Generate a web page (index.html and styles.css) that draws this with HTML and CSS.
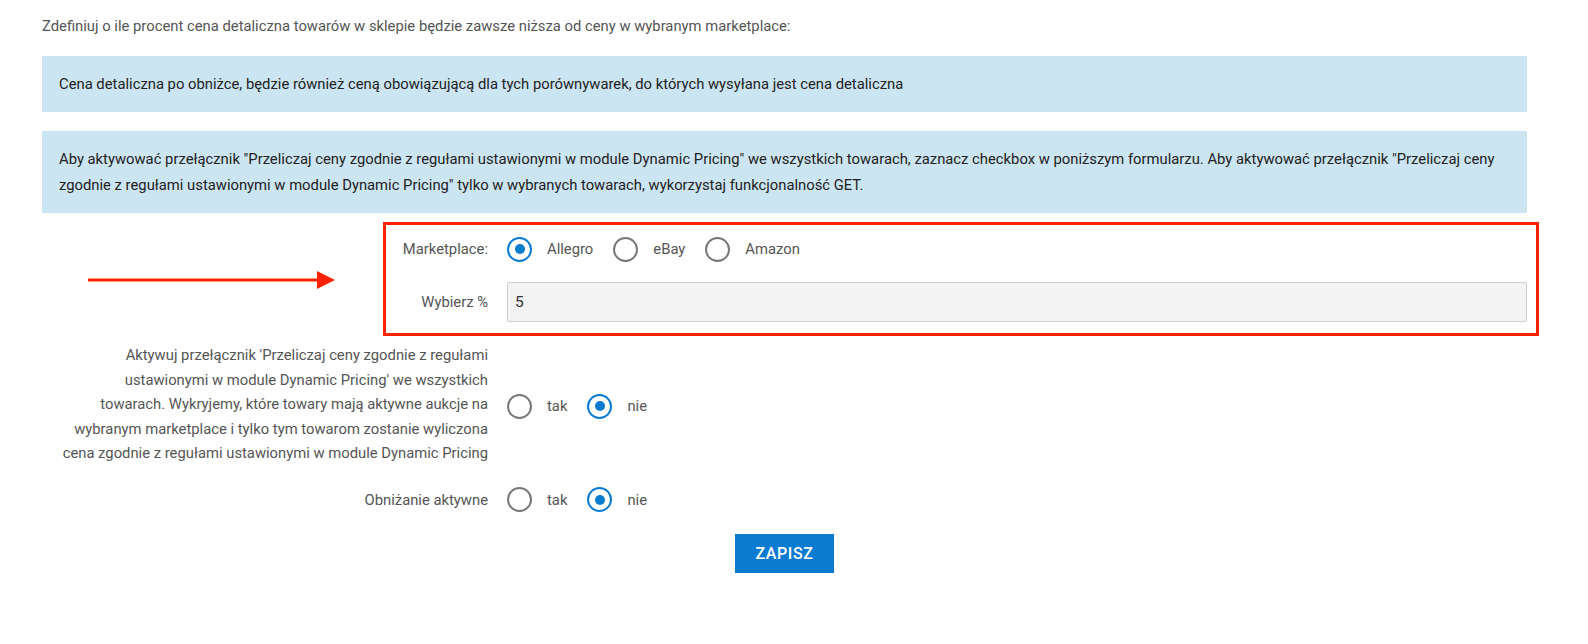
FILE: index.html
```html
<!DOCTYPE html>
<html lang="pl">
<head>
<meta charset="utf-8">
<title>Dynamic Pricing</title>
<link rel="stylesheet" href="styles.css">
</head>
<body>
<div class="page">
  <p class="intro">Zdefiniuj o ile procent cena detaliczna towarów w sklepie będzie zawsze niższa od ceny w wybranym marketplace:</p>
  <div class="alert alert-first">Cena detaliczna po obniżce, będzie również ceną obowiązującą dla tych porównywarek, do których wysyłana jest cena detaliczna</div>
  <div class="alert">Aby aktywować przełącznik "Przeliczaj ceny zgodnie z regułami ustawionymi w module Dynamic Pricing" we wszystkich towarach, zaznacz checkbox w poniższym formularzu. Aby aktywować przełącznik "Przeliczaj ceny zgodnie z regułami ustawionymi w module Dynamic Pricing" tylko w wybranych towarach, wykorzystaj funkcjonalność GET.</div>

  <form class="form">
    <div class="highlight">
      <div class="row row-market">
        <div class="label">Marketplace:</div>
        <div class="control radios">
          <label class="opt"><span class="radio checked"></span><span>Allegro</span></label>
          <label class="opt"><span class="radio"></span><span>eBay</span></label>
          <label class="opt"><span class="radio"></span><span>Amazon</span></label>
        </div>
      </div>
      <div class="row row-input">
        <div class="label">Wybierz %</div>
        <div class="control"><div class="input">5</div></div>
      </div>
      <div class="red-frame"></div>
      <svg class="arrow" width="247" height="18" viewBox="0 0 247 18"><line x1="0" y1="9" x2="231" y2="9" stroke="#ff2200" stroke-width="3"/><polygon points="229,0 247,9 229,18" fill="#ff2200"/></svg>
    </div>

    <div class="row row-desc">
      <div class="label desc">Aktywuj przełącznik 'Przeliczaj ceny zgodnie z regułami<br>ustawionymi w module Dynamic Pricing' we wszystkich<br>towarach. Wykryjemy, które towary mają aktywne aukcje na<br>wybranym marketplace i tylko tym towarom zostanie wyliczona<br>cena zgodnie z regułami ustawionymi w module Dynamic Pricing</div>
      <div class="control radios radios-desc">
        <label class="opt"><span class="radio"></span><span>tak</span></label>
        <label class="opt"><span class="radio checked"></span><span>nie</span></label>
      </div>
    </div>

    <div class="row row-active">
      <div class="label">Obniżanie aktywne</div>
      <div class="control radios">
        <label class="opt"><span class="radio"></span><span>tak</span></label>
        <label class="opt"><span class="radio checked"></span><span>nie</span></label>
      </div>
    </div>

    <div class="actions"><button type="button" class="btn">ZAPISZ</button></div>
  </form>
</div>
</body>
</html>
```

FILE: styles.css
```css
html, body {
  margin: 0;
  padding: 0;
  background: #ffffff;
}
body {
  font-family: Roboto, "Liberation Sans", Arial, sans-serif;
  font-size: 14.8px;
  color: #555555;
}
.page {
  padding: 14px 61px 0 42px;
}
.intro {
  margin: 0 0 17px;
  line-height: 25px;
  color: #555555;
}
.alert {
  background: #cce5f3;
  color: #222222;
  padding: 15px 17px;
  line-height: 26px;
}
.alert-first {
  margin-bottom: 19px;
}
.form {
  padding-top: 16px;
}
.highlight {
  position: relative;
}
.row {
  display: grid;
  grid-template-columns: 446px 1fr;
  column-gap: 19px;
  align-items: center;
}
.row-market {
  height: 40px;
}
.row-input {
  margin-top: 13px;
}
.row-desc {
  margin-top: 21px;
}
.row-active {
  margin-top: 14px;
  height: 40px;
}
.label {
  text-align: right;
  color: #555555;
}
.desc {
  line-height: 24.5px;
  white-space: nowrap;
}
.radios {
  display: flex;
  align-items: center;
}
.radios-desc {
  padding-top: 4px;
}
.opt {
  display: flex;
  align-items: center;
  gap: 15px;
  margin-right: 20px;
  color: #555555;
}
.radio {
  box-sizing: border-box;
  width: 25px;
  height: 25px;
  border: 2px solid #777777;
  border-radius: 50%;
  display: flex;
  align-items: center;
  justify-content: center;
}
.radio.checked {
  border-color: #0a7bd0;
  border-width: 2.5px;
}
.radio.checked::after {
  content: "";
  width: 10px;
  height: 10px;
  border-radius: 50%;
  background: #0a7bd0;
}
.input {
  box-sizing: border-box;
  height: 40px;
  background: #f3f3f3;
  border: 1px solid #cfcfcf;
  border-radius: 2px;
  padding-left: 7px;
  display: flex;
  align-items: center;
  font-size: 15.5px;
  color: #333333;
}
.red-frame {
  position: absolute;
  top: -7px;
  bottom: -14px;
  left: 341px;
  right: -12px;
  border: 3px solid #ff2200;
  pointer-events: none;
}
.arrow {
  position: absolute;
  left: 46px;
  top: 42px;
}
.actions {
  display: flex;
  justify-content: center;
  margin-top: 14px;
}
.btn {
  width: 99px;
  height: 39px;
  border: 0;
  border-radius: 0;
  background: #0a7bd0;
  color: #ffffff;
  font-family: Roboto, "Liberation Sans", Arial, sans-serif;
  font-size: 16px;
  font-weight: 500;
  letter-spacing: 0.6px;
  padding: 0;
}
```
